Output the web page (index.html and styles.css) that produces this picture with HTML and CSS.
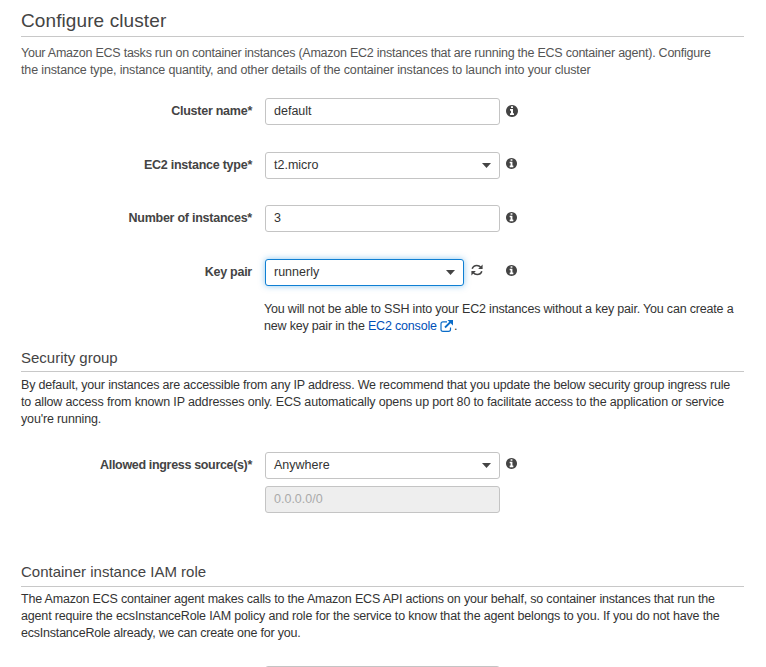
FILE: index.html
```html
<!DOCTYPE html>
<html lang="en">
<head>
<meta charset="utf-8">
<title>Configure cluster</title>
<link rel="stylesheet" href="styles.css">
</head>
<body>
<svg class="defs" width="0" height="0" aria-hidden="true">
  <symbol id="info" viewBox="128 128 1536 1536"><path d="M1152 1376v-160q0-14-9-23t-23-9h-96v-512q0-14-9-23t-23-9h-320q-14 0-23 9t-9 23v160q0 14 9 23t23 9h96v320h-96q-14 0-23 9t-9 23v160q0 14 9 23t23 9h448q14 0 23-9t9-23zm-128-896v-160q0-14-9-23t-23-9h-192q-14 0-23 9t-9 23v160q0 14 9 23t23 9h192q14 0 23-9t9-23zm640 416q0 209-103 385.5t-279.5 279.5-385.5 103-385.5-103-279.5-279.5-103-385.5 103-385.5 279.5-279.5 385.5-103 385.5 103 279.5 279.5 103 385.5z"/></symbol>
</svg>
<main>
  <section>
    <h1>Configure cluster</h1>
    <p class="intro"><span class="tightest">Your Amazon ECS tasks run on container instances (Amazon EC2 instances that are running the ECS container agent). Configure</span><br><span class="snug">the instance type, instance quantity, and other details of the container instances to launch into your cluster</span></p>
    <div class="row first"><label>Cluster name*</label><div class="field">default</div><svg class="info big"><use href="#info"/></svg></div>
    <div class="row"><label>EC2 instance type*</label><div class="field">t2.micro<i class="caret"></i></div><svg class="info"><use href="#info"/></svg></div>
    <div class="row"><label>Number of instances*</label><div class="field">3</div><svg class="info"><use href="#info"/></svg></div>
    <div class="row key"><label>Key pair</label><div class="field focus">runnerly<i class="caret"></i></div>
      <svg class="refresh" viewBox="0 0 12 12"><path d="M1.2 4.8Q2.3 1.5 5.8 1.5Q8.2 1.5 10 3.5M10.8 7.2Q9.7 10.5 6.2 10.5Q3.8 10.5 2 8.5"/><path class="head" d="M11.6.4v4.5H7.1zM.4 11.6V7.1h4.5z"/></svg>
      <svg class="info"><use href="#info"/></svg></div>
    <p class="note">You will not be able to SSH into your EC2 instances without a key pair. You can create a<br>new key pair in the <a>EC2 console <svg class="ext" viewBox="0 0 14 12"><path d="M7 1.8H3Q1 1.8 1 3.8V9.5Q1 11.3 3 11.3H8.5Q10.5 11.3 10.5 9.5V7.5"/><path class="shaft" d="M5 7.5 10.5 2"/><path class="head" d="M7.5 0H13v5.5z"/></svg></a>.</p>
  </section>
  <section class="security">
    <h2>Security group</h2>
    <p>By default, your instances are accessible from any IP address. We recommend that you update the below security group ingress rule<br><span class="snug">to allow access from known IP addresses only. ECS automatically opens up port 80 to facilitate access to the application or service<br>you're running.</span></p>
    <div class="row ingress"><label>Allowed ingress source(s)*</label><div class="field">Anywhere<i class="caret"></i></div><svg class="info"><use href="#info"/></svg></div>
    <div class="field disabled">0.0.0.0/0</div>
  </section>
  <section class="role">
    <h2>Container instance IAM role</h2>
    <p>The Amazon ECS container agent makes calls to the Amazon ECS API actions on your behalf, so container instances that run the<br><span class="medium">agent require the ecsInstanceRole IAM policy and role for the service to know that the agent belongs to you. If you do not have the</span><br><span class="closing">ecsInstanceRole already, we can create one for you.</span></p>
    <div class="field next"></div>
  </section>
</main>
</body>
</html>
```
FILE: styles.css
```css
* { box-sizing: border-box; }
html, body { margin: 0; height: 667px; overflow: hidden; background: #fff; }
body { font: 12.5px/17px "Liberation Sans", Arial, sans-serif; color: #333; }
.defs { position: absolute; }
main { width: 744px; padding-left: 21px; }
h1, h2, p { margin: 0; font-weight: 400; white-space: nowrap; }
h1 { height: 37px; padding-top: 10px; font-size: 19px; line-height: 22px; letter-spacing: .1px; border-bottom: 1px solid #c8c8c8; color: #444; }
h2 { height: 24px; font-size: 15px; line-height: 20px; border-bottom: 1px solid #c8c8c8; color: #444; }
p { padding-top: 5px; letter-spacing: -.188px; }
.tightest { letter-spacing: -.242px; }
.medium { letter-spacing: -.168px; }
.snug { letter-spacing: -.146px; }
.closing { letter-spacing: -.21px; }
.intro { padding-top: 8px; color: #555; }
.row { display: flex; height: 27px; margin-top: 26.5px; align-items: flex-start; }
.row.first { margin-top: 19px; }
label { width: 231px; margin-right: 13px; text-align: right; font-weight: 700; line-height: 27px; letter-spacing: -.25px; color: #444; }
.ingress label { letter-spacing: -.33px; }
.field { display: flex; justify-content: space-between; align-items: center; width: 235px; height: 27px; padding: 0 8px; border: 1px solid #c4c4c4; border-radius: 3px; background: #fff; }
.caret { width: 9px; height: 5px; background: #444; clip-path: polygon(0 0, 100% 0, 50% 100%); margin-top: 1px; }
.info { width: 11px; height: 11px; margin: 6.5px 0 0 6px; fill: #444; }
.info.big { width: 12px; height: 12px; margin-top: 7px; }
.focus { width: 199px; border-color: #0f7fd3; box-shadow: 0 0 6px rgba(30, 145, 225, .5); }
.refresh { width: 12px; height: 12px; margin: 5px 17px 0 7px; fill: none; stroke: #444; stroke-width: 1.6; }
.refresh .head { fill: #444; stroke: none; }
.note { margin-left: 243px; padding-top: 15px; }
a { color: #0050b8; }
.ext { width: 14px; height: 12px; vertical-align: -2px; fill: none; stroke: #0a6cc8; stroke-width: 1.2; }
.ext .shaft { stroke-width: 1.8; }
.ext .head { fill: #0a6cc8; stroke: none; }
.security { margin-top: 13px; }
.ingress { margin-top: 24px; }
.disabled { margin: 7px 0 0 244px; background: #eee; color: #aaa; }
.role { margin-top: 49px; }
.role h2 { height: 25px; }
.role p { padding-top: 4px; }
.next { margin: 24px 0 0 244px; }
```
